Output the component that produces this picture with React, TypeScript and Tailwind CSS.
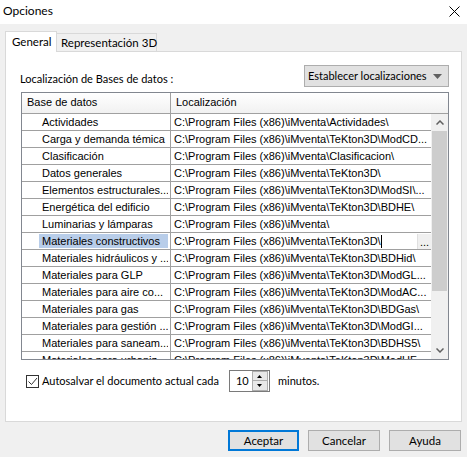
import React from "react";

const rows: [string, string][] = [
  ["Actividades", "C:\\Program Files (x86)\\iMventa\\Actividades\\"],
  ["Carga y demanda témica", "C:\\Program Files (x86)\\iMventa\\TeKton3D\\ModCD..."],
  ["Clasificación", "C:\\Program Files (x86)\\iMventa\\Clasificacion\\"],
  ["Datos generales", "C:\\Program Files (x86)\\iMventa\\TeKton3D\\"],
  ["Elementos estructurales...", "C:\\Program Files (x86)\\iMventa\\TeKton3D\\ModSI\\..."],
  ["Energética del edificio", "C:\\Program Files (x86)\\iMventa\\TeKton3D\\BDHE\\"],
  ["Luminarias y lámparas", "C:\\Program Files (x86)\\iMventa\\"],
  ["Materiales constructivos", "C:\\Program Files (x86)\\iMventa\\TeKton3D\\"],
  ["Materiales hidráulicos y ...", "C:\\Program Files (x86)\\iMventa\\TeKton3D\\BDHid\\"],
  ["Materiales para GLP", "C:\\Program Files (x86)\\iMventa\\TeKton3D\\ModGL..."],
  ["Materiales para aire co...", "C:\\Program Files (x86)\\iMventa\\TeKton3D\\ModAC..."],
  ["Materiales para gas", "C:\\Program Files (x86)\\iMventa\\TeKton3D\\BDGas\\"],
  ["Materiales para gestión ...", "C:\\Program Files (x86)\\iMventa\\TeKton3D\\ModGI..."],
  ["Materiales para saneam...", "C:\\Program Files (x86)\\iMventa\\TeKton3D\\BDHS5\\"],
  ["Materiales para urbaniz...", "C:\\Program Files (x86)\\iMventa\\TeKton3D\\ModUF..."],
];

function Row({ name, path, selected }: { name: string; path: string; selected?: boolean }) {
  return (
    <div className="flex h-[17px] shrink-0 border-b border-[#a0a0a0] leading-[16px]">
      <div className="w-[149px] shrink-0 border-r border-[#a0a0a0] pl-[17px] pr-[2px] flex">
        <div
          className={
            "flex-1 pl-[3px] whitespace-nowrap overflow-hidden " +
            (selected ? "bg-[#b8cde9] mb-[1px] mt-[1px] leading-[14px]" : "")
          }
        >
          {name}
        </div>
      </div>
      <div className="flex-1 pl-[3px] whitespace-nowrap overflow-hidden flex items-center relative">
        <span>{path}</span>
        {selected && <span className="inline-block w-px h-[13px] bg-black"></span>}
        {selected && (
          <div className="absolute right-[0px] top-[1px] w-[14px] h-[15px] bg-[#f0f0f0] border-l border-[#e0e0e0] flex items-end justify-center leading-[12px] text-[11px] pb-[1px]">
            ...
          </div>
        )}
      </div>
    </div>
  );
}

export default function App() {
  return (
    <div className="w-[467px] h-[457px] bg-[#f0f0f0] flex flex-col overflow-hidden text-black text-[11px] font-['Lato','Liberation_Sans',sans-serif]">
      {/* Title bar */}
      <div className="h-[24px] shrink-0 bg-white flex items-center justify-between pl-[3px] pr-[7px]">
        <span className="text-[12px] leading-[14px] mt-[-3px]">Opciones</span>
        <svg width="11" height="11" viewBox="0 0 11 11" className="mt-[-2px]">
          <path d="M0.5 0.5 L10.5 10.5 M10.5 0.5 L0.5 10.5" stroke="#000" strokeWidth="1" />
        </svg>
      </div>

      {/* Tabs */}
      <div className="pt-[7px] px-[5px] shrink-0">
        <div className="flex items-end h-[21px] relative z-10 -mb-px">
          <div className="w-[52px] h-[21px] bg-white border-t border-l border-r border-[#d9d9d9] flex items-start pl-[6px] pt-[3px] leading-[14px] whitespace-nowrap text-[11.5px]">
            General
          </div>
          <div className="w-[100px] h-[18px] mb-[1px] bg-[#f0f0f0] border-t border-r border-[#d9d9d9] pl-[4px] pt-[2px] leading-[14px] whitespace-nowrap text-[11.5px]">
            Representación 3D
          </div>
        </div>
      </div>

      {/* Panel */}
      <div className="mx-[5px] h-[371px] shrink-0 bg-white border border-[#d9d9d9] flex flex-col">
        <div className="flex items-start justify-between mt-[13px] pl-[14px] pr-[12px]">
          <span className="mt-[7px] leading-[14px]">Localización de Bases de datos :</span>
          <div className="w-[145px] h-[22px] bg-[#e1e1e1] border border-[#adadad] flex items-center justify-between pl-[3px] pr-[6px]">
            <span className="leading-[14px] whitespace-nowrap">Establecer localizaciones</span>
            <svg width="9" height="5" viewBox="0 0 9 5">
              <path d="M0 0 L9 0 L4.5 5 Z" fill="#606060" />
            </svg>
          </div>
        </div>

        {/* Table */}
        <div className="ml-[15px] mt-[5px] w-[428px] h-[268px] border border-[#828790] flex flex-col overflow-hidden font-['Liberation_Sans',Arial,sans-serif] text-[11px]">
          <div className="h-[21px] shrink-0 flex border-b border-[#a0a0a0] bg-gradient-to-b from-white to-[#f1f1f1] leading-[19px]">
            <div className="w-[149px] shrink-0 border-r border-[#a0a0a0] pl-[5px]">Base de datos</div>
            <div className="flex-1 pl-[5px]">Localización</div>
          </div>
          <div className="flex flex-1 min-h-0">
            <div className="w-[409px] shrink-0 flex flex-col overflow-hidden">
              {rows.map(([n, p], i) => (
                <Row key={i} name={n} path={p} selected={i === 7} />
              ))}
            </div>
            <div className="w-[17px] shrink-0 bg-[#f0f0f0] flex flex-col">
              <div className="h-[17px] flex items-center justify-center">
                <svg width="8" height="5" viewBox="0 0 8 5">
                  <path d="M0.5 4.5 L4 1 L7.5 4.5" stroke="#606060" strokeWidth="1.5" fill="none" />
                </svg>
              </div>
              <div className="h-[160px] bg-[#cdcdcd] mx-[1px]"></div>
              <div className="flex-1"></div>
              <div className="h-[17px] flex items-center justify-center">
                <svg width="8" height="5" viewBox="0 0 8 5">
                  <path d="M0.5 0.5 L4 4 L7.5 0.5" stroke="#606060" strokeWidth="1.5" fill="none" />
                </svg>
              </div>
            </div>
          </div>
        </div>

        {/* Autosave row */}
        <div className="flex items-center mt-[10px] ml-[20px] h-[22px]">
          <div className="w-[13px] h-[13px] border border-[#333333] bg-white flex items-center justify-center">
            <svg width="11" height="11" viewBox="0 0 11 11">
              <path d="M1.5 5.5 L4.5 8.5 L10 2" stroke="#333333" strokeWidth="1" fill="none" />
            </svg>
          </div>
          <span className="ml-[3px] leading-[14px] whitespace-nowrap text-[11px]">Autosalvar el documento actual cada</span>
          <div className="ml-[10px] w-[41px] h-[22px] shrink-0 border border-[#7a7a7a] bg-white flex items-center">
            <span className="pl-[6px] flex-1 leading-[14px]">10</span>
            <div className="flex flex-col w-[16px] h-[20px] mr-[1px]">
              <div className="h-[10px] bg-[#e8e8e8] border border-[#adadad] flex items-center justify-center">
                <svg width="5" height="3" viewBox="0 0 5 3"><path d="M0 3 L5 3 L2.5 0 Z" fill="#000" /></svg>
              </div>
              <div className="h-[10px] bg-[#e8e8e8] border border-[#adadad] border-t-0 flex items-center justify-center">
                <svg width="5" height="3" viewBox="0 0 5 3"><path d="M0 0 L5 0 L2.5 3 Z" fill="#000" /></svg>
              </div>
            </div>
          </div>
          <span className="ml-[8px] leading-[14px] text-[11px]">minutos.</span>
        </div>
      </div>

      {/* Buttons */}
      <div className="flex justify-end gap-[9px] mt-[8px] pr-[6px]">
        <div className="w-[71px] h-[21px] bg-[#e1e1e1] border-2 border-[#0078d7] flex items-center justify-center leading-[14px] text-[11.5px]">
          Aceptar
        </div>
        <div className="w-[72px] h-[21px] bg-[#e1e1e1] border border-[#adadad] flex items-center justify-center leading-[14px] text-[11.5px]">
          Cancelar
        </div>
        <div className="w-[72px] h-[21px] bg-[#e1e1e1] border border-[#adadad] flex items-center justify-center leading-[14px] text-[11.5px]">
          Ayuda
        </div>
      </div>
    </div>
  );
}
